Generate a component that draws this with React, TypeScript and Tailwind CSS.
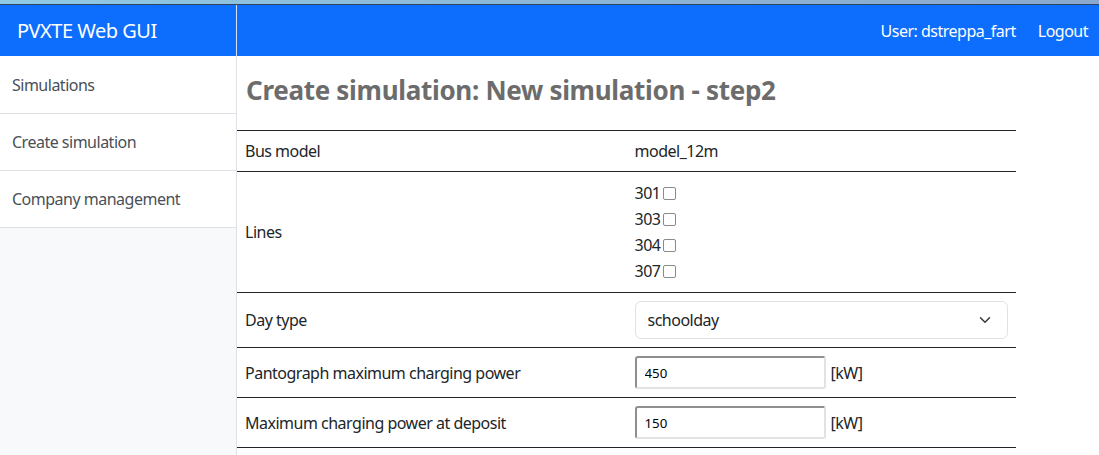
import React from "react";

const lines = ["301", "303", "304", "307"];
const menu = ["Simulations", "Create simulation", "Company management"];

function Chevron() {
  return (
    <svg width="12" height="12" viewBox="0 0 16 16" fill="none">
      <path d="M2 5l6 6 6-6" stroke="#343a40" strokeWidth="2" strokeLinecap="round" strokeLinejoin="round" />
    </svg>
  );
}

function PowerInput({ value }: { value: string }) {
  return (
    <div className="flex items-center">
      <input
        readOnly
        value={value}
        className="w-[191px] h-[33px] px-[8px] text-[13.3px] tracking-normal text-black bg-white rounded-[3px] border-2 border-t-[#8f8f8f] border-l-[#8f8f8f] border-b-[#e2e2e2] border-r-[#e2e2e2] outline-none"
      />
      <span className="ml-[5px]">[kW]</span>
    </div>
  );
}

export default function App() {
  return (
    <div className="h-[455px] overflow-hidden bg-white text-[16px] tracking-[-0.5px] text-[#212529] font-['Noto_Sans','Open_Sans',sans-serif]">
      <div className="h-[5px] bg-gradient-to-r from-[#8fcae6] via-[#8cb6d6] to-[#8aa9cc] border-b border-[#2f4660]" />

      <nav className="flex h-[51px] bg-[#0d6efd] text-white">
        <div className="w-[237px] flex items-center pl-[17px] text-[20px] border-r border-[#d6e4fb]">
          PVXTE Web GUI
        </div>
        <div className="flex-1 flex items-center justify-end gap-[22px] pr-[11px]">
          <span>User: dstreppa_fart</span>
          <span>Logout</span>
        </div>
      </nav>

      <div className="flex h-[399px]">
        <aside className="w-[237px] shrink-0 bg-[#f8f9fa] border-r border-[#dee2e6]">
          {menu.map((m, i) => (
            <div
              key={m}
              className={`${i === 0 ? "h-[58px]" : "h-[57px]"} flex items-center pl-[12px] bg-white border-b border-[#dee2e6] text-[#495057]`}
            >
              {m}
            </div>
          ))}
        </aside>

        <main className="flex-1">
          <h3 className="pl-[9px] pt-[17px] pb-[23px] text-[26px] leading-[34px] font-bold tracking-[-0.3px] text-[#6c6c6c]">
            Create simulation: New simulation - step2
          </h3>

          <table className="w-[779px] border-collapse">
            <tbody>
              <tr className="border-t border-[#212529]">
                <td className="w-1/2 px-2 py-2 leading-6">Bus model</td>
                <td className="px-2 py-2 leading-6">model_12m</td>
              </tr>
              <tr className="border-t border-[#212529]">
                <td className="px-2 py-2 align-middle">Lines</td>
                <td className="px-2 py-2">
                  <div className="flex flex-col">
                    {lines.map((l) => (
                      <label key={l} className="h-[26px] flex items-center">
                        {l}
                        <input
                          type="checkbox"
                          className="appearance-none ml-[3px] w-[13px] h-[13px] bg-white border-[1.5px] border-[#8a8a8a] rounded-[2px]"
                        />
                      </label>
                    ))}
                  </div>
                </td>
              </tr>
              <tr className="border-t border-[#212529]">
                <td className="px-2 py-2">Day type</td>
                <td className="px-2 py-2">
                  <div className="h-[38px] flex items-center justify-between pl-[12px] pr-[16px] border border-[#dee2e6] rounded-[6px]">
                    <span>schoolday</span>
                    <Chevron />
                  </div>
                </td>
              </tr>
              <tr className="border-t border-[#212529]">
                <td className="px-2 py-2">Pantograph maximum charging power</td>
                <td className="px-2 py-2">
                  <PowerInput value="450" />
                </td>
              </tr>
              <tr className="border-y border-[#212529]">
                <td className="px-2 py-2">Maximum charging power at deposit</td>
                <td className="px-2 py-2">
                  <PowerInput value="150" />
                </td>
              </tr>
            </tbody>
          </table>
        </main>
      </div>
    </div>
  );
}
